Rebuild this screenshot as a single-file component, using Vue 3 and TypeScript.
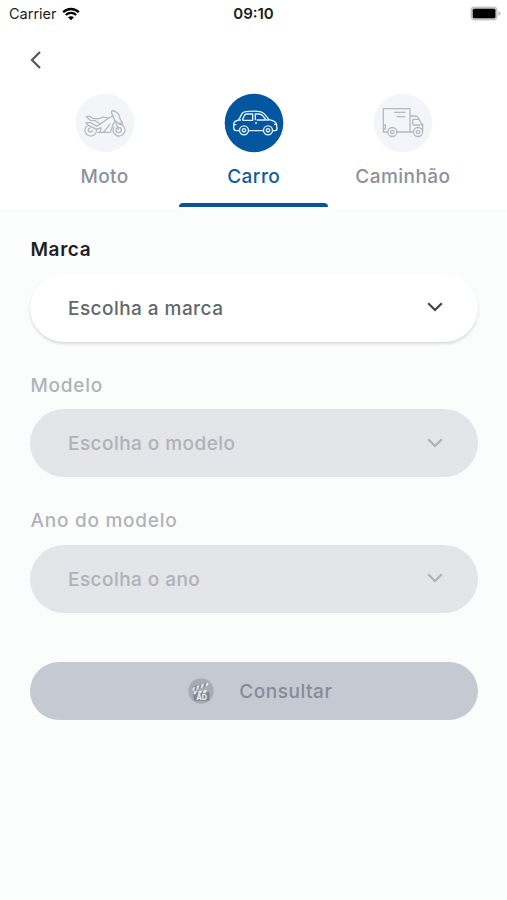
<script setup lang="ts">
import { ref } from 'vue'

type Vehicle = 'moto' | 'carro' | 'caminhao'

interface Field {
  id: string
  label: string
  placeholder: string
  enabled: boolean
}

const tabs: { id: Vehicle; label: string }[] = [
  { id: 'moto', label: 'Moto' },
  { id: 'carro', label: 'Carro' },
  { id: 'caminhao', label: 'Caminhão' },
]

const fields: Field[] = [
  { id: 'marca', label: 'Marca', placeholder: 'Escolha a marca', enabled: true },
  { id: 'modelo', label: 'Modelo', placeholder: 'Escolha o modelo', enabled: false },
  { id: 'ano', label: 'Ano do modelo', placeholder: 'Escolha o ano', enabled: false },
]

const active = ref<Vehicle>('carro')
</script>

<template>
  <div class="screen">
    <header class="top">
      <div class="status">
        <div class="carrier">
          <span>Carrier</span>
          <svg class="wifi" viewBox="0 0 18 14" width="18" height="14">
            <path d="M1.2 5.2C5.6 .9 12.4 .9 16.8 5.2" />
            <path d="M3.8 8C6.8 5.2 11.2 5.2 14.2 8" />
            <path class="wifi-dot" d="M9 13.2L6 10.3C7.7 8.8 10.3 8.8 12 10.3Z" />
          </svg>
        </div>
        <span class="clock">09:10</span>
        <svg class="battery" viewBox="0 0 31 15" width="31" height="15">
          <rect x=".5" y=".5" width="27" height="14" rx="4" fill="#c4c4c4" />
          <rect x="2.8" y="2.7" width="22.6" height="9.6" rx="1.6" fill="#000" />
          <path d="M28.5 5.2Q30.5 6 30.5 7.5T28.5 9.8Z" fill="#b5b5b5" />
        </svg>
      </div>

      <button class="back" type="button" aria-label="Voltar">
        <svg viewBox="0 0 12 20" width="12" height="20"><path d="M10 2L2 10L10 18" /></svg>
      </button>

      <nav class="tabs">
        <button
          v-for="tab in tabs"
          :key="tab.id"
          type="button"
          class="tab"
          :class="{ active: tab.id === active }"
          @click="active = tab.id"
        >
          <svg class="vehicle" viewBox="0 0 210 210" width="70" height="70">
            <circle class="disc" cx="105" cy="105" r="88" />
            <g v-if="tab.id === 'moto'" class="lines">
              <path d="M52 113A17 17 0 1 0 78 121M67 126A6 6 0 1 1 61 120" />
              <path d="M132 116A18 18 0 1 0 147 108" />
              <circle cx="146" cy="126" r="8" />
              <path d="M49 86L58 84L70 92L86 92L101 87L116 90L91 108L76 98L61 97Z" />
              <path d="M47 104H62L80 115L91 108M47 104L55 112L80 124L94 119M82 133H121L129 109L137 97" />
              <path d="M116 90L130 83L125 77V69H134L146 79L151 95L158 105L146 106L135 98L128 84M94 119L90 132M101 132L121 107M137 103L146 126" />
            </g>
            <g v-else-if="tab.id === 'carro'" class="lines">
              <path d="M61 128H51Q44 127 44 119V107Q46 99 59 96L69 77Q72 72 80 71Q103 68 124 71Q132 73 138 80L150 95Q169 99 172 107L174 122Q174 128 166 128H160M88 128H133" />
              <circle cx="75" cy="127" r="13.5" />
              <circle cx="75" cy="127" r="5" />
              <circle cx="147" cy="127" r="13.5" />
              <circle cx="147" cy="127" r="5" />
              <path d="M70 96L77 81Q79 78 84 78H101V97H70M109 97V78H121Q128 79 133 85L141 96H113M59 96H66M143 96H150M45 110H52M165 109H172M108 105H114" />
            </g>
            <g v-else class="lines">
              <path d="M59 132H46V62H126V132H86M46 111H52V123H46M79 73H112M86 86H112" />
              <path d="M126 84H145Q149 85 151 89L158 103L164 109V132H164M126 132H137M157 111H138Q134 111 134 107V97Q134 94 138 94H153M158 111H164M159 123H164" />
              <circle cx="73" cy="132" r="13.5" />
              <circle cx="73" cy="132" r="5" />
              <circle cx="150" cy="132" r="13.5" />
              <circle cx="150" cy="132" r="5" />
            </g>
          </svg>
          <span class="tab-label">{{ tab.label }}</span>
        </button>
      </nav>
    </header>

    <main class="form">
      <div v-for="f in fields" :key="f.id" class="field" :class="{ disabled: !f.enabled }">
        <span class="label">{{ f.label }}</span>
        <button type="button" class="select" :disabled="!f.enabled">
          <span>{{ f.placeholder }}</span>
          <svg class="chevron" viewBox="0 0 18 12" width="18" height="12">
            <path d="M2.2 2.2L9 9L15.8 2.2" />
          </svg>
        </button>
      </div>

      <button type="button" class="submit" disabled>
        <svg class="ad" viewBox="0 0 78 78" width="26" height="26">
          <circle cx="39" cy="39" r="38" fill="#a6acb4" />
          <path d="M15 43H64V65Q64 68 61 68H21Q17 68 17 64Z" fill="#7d858e" />
          <path d="M12 27L61 12L63 22L15 38Z" fill="#848c95" />
          <path d="M13 29L21 26L19 37L14 39ZM27 24L35 21L31 33L24 35ZM41 19L49 16L45 28L37 31ZM55 15L61 13L62 22L52 26ZM18 40H27L23 49H16ZM34 38H42L38 47H29ZM49 36H57L53 46H44Z" fill="#e0e7ec" />
          <text x="41" y="65" text-anchor="middle">AD</text>
        </svg>
        <span>Consultar</span>
      </button>
    </main>
  </div>
</template>

<style>
body {
  margin: 0;
  background: #fbfdfd;
}
</style>

<style scoped>
.screen {
  min-height: 900px;
  background: #fbfdfd;
  font-family: Inter, "Liberation Sans", sans-serif;
}
button {
  margin: 0;
  padding: 0;
  border: 0;
  background: none;
  font: inherit;
  color: inherit;
}
svg {
  display: block;
  flex: none;
}
.top {
  height: 209px;
  background: #fff;
}
.status {
  display: grid;
  grid-template-columns: 1fr auto 1fr;
  align-items: center;
  height: 27px;
  padding: 0 6px 0 9px;
  box-sizing: border-box;
  font-size: 14.5px;
  color: #1c1c1c;
}
.carrier {
  display: flex;
  align-items: center;
  gap: 5px;
}
.wifi {
  fill: none;
  stroke: #000;
  stroke-width: 2.3;
}
.wifi-dot {
  fill: #000;
  stroke: none;
}
.clock {
  padding-right: 3px;
  font-weight: 600;
  font-size: 15px;
}
.battery {
  justify-self: end;
}
.back {
  display: block;
  margin: 23px 0 0 30px;
}
.back path,
.chevron path {
  fill: none;
  stroke: #53565b;
  stroke-width: 2.2;
}
.tabs {
  display: grid;
  grid-template-columns: repeat(3, 1fr);
  margin: 18px 29.5px 0 30px;
}
.tab {
  display: flex;
  flex-direction: column;
  align-items: center;
  height: 119px;
  box-sizing: border-box;
  color: #8b919c;
  position: relative;
}
.disc {
  fill: #f3f5f8;
}
.lines {
  fill: none;
  stroke: #b4b9c0;
  stroke-width: 3.8;
  stroke-linejoin: round;
}
.tab-label {
  margin-top: 7px;
  font-size: 19px;
  line-height: 24px;
  font-weight: 500;
  letter-spacing: 0.45px;
}
.active {
  color: #0f5ca5;
}
.active .disc {
  fill: #04569f;
}
.active .lines {
  stroke: #e0eef9;
  stroke-width: 4.2;
}
.active::after {
  content: "";
  position: absolute;
  left: 0;
  right: 0;
  bottom: 0;
  height: 4px;
  border-radius: 4px 4px 0 0;
  background: #07549b;
}
.form {
  padding: 28px 29.5px 0 30px;
}
.field {
  display: flex;
  flex-direction: column;
  margin-bottom: 31px;
}
.label {
  height: 25px;
  margin-bottom: 11.5px;
  padding-left: 0.5px;
  font-size: 19px;
  line-height: 25px;
  font-weight: 600;
  letter-spacing: 0.6px;
  color: #1d1f22;
}
.select {
  display: flex;
  align-items: center;
  justify-content: space-between;
  height: 68px;
  padding: 0 34px 0 38px;
  border-radius: 34px;
  background: #fff;
  box-shadow: 0 2px 3px rgba(40, 50, 60, 0.17);
  color: #63676c;
  font-size: 19px;
  font-weight: 500;
  letter-spacing: 0.45px;
}
.select span {
  padding-top: 1px;
}
.chevron {
  margin-bottom: 1px;
}
.chevron path {
  stroke: #414449;
}
.disabled .label {
  font-weight: 500;
  letter-spacing: 0.75px;
  color: #aeb3b8;
}
.disabled .select {
  background: #e3e5e9;
  box-shadow: none;
  color: #aeb3b8;
}
.disabled .chevron path {
  stroke: #aeb3b8;
}
.submit {
  display: flex;
  align-items: center;
  justify-content: center;
  gap: 25px;
  width: 100%;
  height: 58px;
  margin-top: 49px;
  padding-left: 13px;
  border-radius: 29px;
  background: #c5c9d1;
  color: #858c98;
  font-size: 19px;
  font-weight: 500;
  letter-spacing: 0.55px;
}
.submit span {
  padding-top: 2px;
}
.ad text {
  font-size: 22px;
  font-weight: 800;
  letter-spacing: 0;
  fill: #e8edf1;
}
</style>
